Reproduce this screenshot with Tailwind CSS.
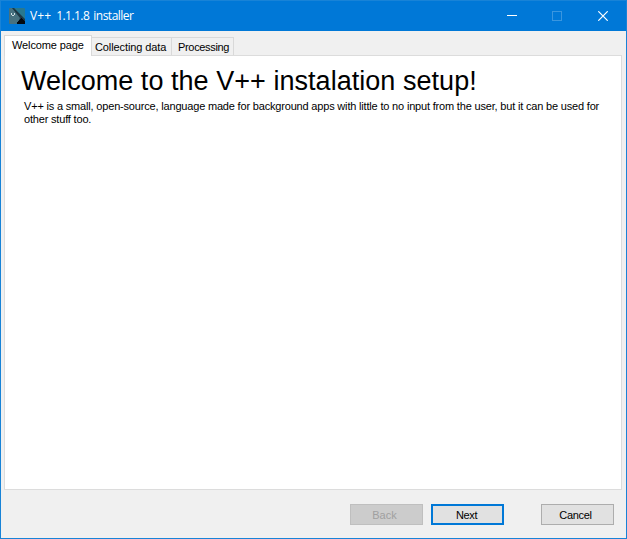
<!DOCTYPE html>
<html lang="en">
<head>
<meta charset="utf-8">
<title>V++ 1.1.1.8 installer</title>
<script src="https://cdn.jsdelivr.net/npm/@tailwindcss/browser@4"></script>
</head>
<body class="overflow-hidden">
<div class="flex h-[539px] w-[627px] flex-col border border-[#1883d7] bg-[#f0f0f0] font-['Liberation_Sans',Arial,sans-serif] text-[11px] whitespace-nowrap text-black">
  <header class="flex h-[30px] shrink-0 items-center bg-[#0078d7] pl-2 text-white">
    <svg class="size-4 shrink-0" viewBox="0 0 16 16">
      <rect width="16" height="16" rx="1" fill="#28788f"/>
      <path d="M0 1 1 0H3L12 10 7 16H1L0 15Z" fill="#47717f"/>
      <path d="M3 0H5L16 11V16H8L11 10Z" fill="#1d3744"/>
      <path d="M8 16V14H9V13H10V12H11V11H12V10H13V11H14V12H15V13H16V16Z" fill="#030910"/>
      <path d="M2 5h1v2H2zM5 5h1v2H5zM3 7h2v1H3z" fill="#d0dfe4"/>
    </svg>
    <span class="ml-[5px] font-['Open_Sans',sans-serif] text-[12px] leading-4"><span class="tracking-[0.1px]">V++</span><span class="ml-[5px] tracking-[-0.55px]">1.1.1.8</span><span class="ml-1 tracking-[-0.5px]">installer</span></span>
    <div class="ml-auto flex h-full">
      <div class="grid w-[46px] place-items-center pl-px"><svg width="10" height="10"><path d="M0 4.5H10" stroke="#fff"/></svg></div>
      <div class="grid w-[45px] place-items-center"><svg width="10" height="10"><rect x=".5" y=".5" width="9" height="9" fill="none" stroke="#3a96df"/></svg></div>
      <div class="grid w-[47px] place-items-center"><svg width="10" height="10"><path d="M.3 .3 9.7 9.7M9.7 .3 .3 9.7" stroke="#fff" stroke-width="1.2"/></svg></div>
    </div>
  </header>
  <nav class="relative z-10 mt-1 ml-[3px] flex h-[21px] shrink-0 items-end">
    <div class="h-[21px] w-[88px] border border-b-0 border-[#d9d9d9] bg-white pl-[7px] leading-[19px]"><span class="tracking-[-0.12px]">Welcome page</span></div>
    <div class="mb-px h-[18px] w-[80px] border border-b-0 border-l-0 border-[#d9d9d9] pl-[3px] leading-[18px]"><span class="tracking-[-0.1px]">Collecting data</span></div>
    <div class="mb-px h-[18px] w-[62px] border border-b-0 border-l-0 border-[#d9d9d9] pl-[6px] leading-[18px]"><span class="tracking-[-0.33px]">Processing</span></div>
  </nav>
  <main class="-mt-px ml-[3px] h-[435px] w-[618px] shrink-0 border border-[#dcdcdc] bg-white">
    <h1 class="mt-[9px] ml-4 text-[27px] leading-8 tracking-[0.04px]">Welcome to the V++ instalation setup!</h1>
    <p class="mt-[3px] ml-[19px] text-[11px] leading-[13px] tracking-[-0.18px]">V++ is a small, open-source, language made for background apps with little to no input from the user, but it can be used for<br>other stuff too.</p>
  </main>
  <footer class="mt-[14px] flex pl-[349px] leading-[20px]">
    <button class="flex h-[21px] w-[73px] justify-center border border-[#bfbfbf] bg-[#cccccc] text-[#a0a0a0]" disabled><span class="-ml-1">Back</span></button>
    <button class="ml-2 flex h-[21px] w-[73px] justify-center border-2 border-[#0078d7] bg-[#e1e1e1] leading-[18px]"><span class="-ml-0.5 tracking-[-0.35px]">Next</span></button>
    <button class="ml-[37px] flex h-[21px] w-[73px] justify-center border border-[#adadad] bg-[#e1e1e1]"><span class="-ml-1 tracking-[-0.3px]">Cancel</span></button>
  </footer>
</div>
</body>
</html>
